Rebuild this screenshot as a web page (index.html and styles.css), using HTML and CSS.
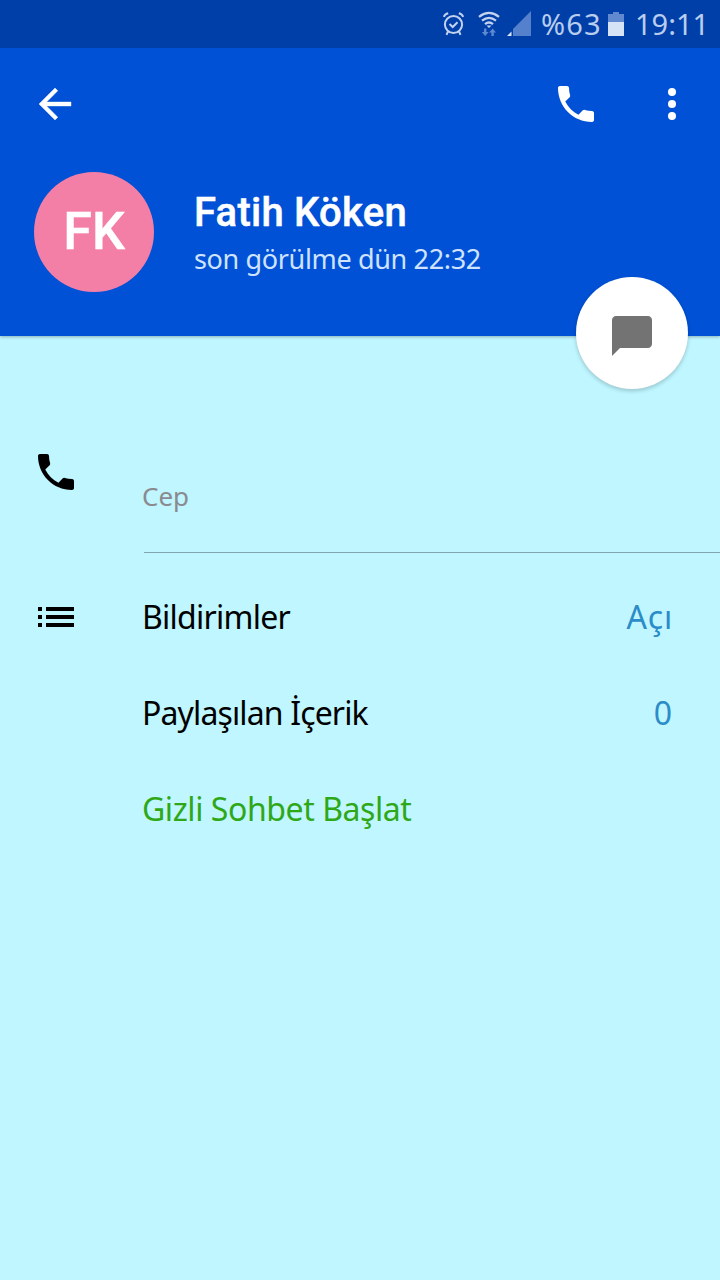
FILE: index.html
```html
<!DOCTYPE html>
<html lang="tr">
<head>
<meta charset="utf-8">
<title>Fatih Köken</title>
<link rel="stylesheet" href="styles.css">
</head>
<body>
<div class="status">
  <svg class="st-alarm" width="24" height="26" viewBox="0 0 24 26" fill="none" stroke="#c3d3ef" stroke-width="2"><circle cx="12.500" cy="13.500" r="8.600"/><path d="M8.500 13l3.200 3 4.800-4.800M2.800 5.800C3.500 4 5 2.800 7.200 2.300M22.200 5.800C21.500 4 20 2.800 17.800 2.300M7 20.500l-1.500 3.300M18 20.500l1.500 3.300"/></svg>
  <svg class="st-wifi" width="22" height="26" viewBox="0 0 22 26" fill="none" stroke="#c3d3ef" stroke-width="2.200"><path d="M1 5.800Q11-2 21 5.800M4 9.600Q11 4 18 9.600M7 13.200Q11 9.800 15 13.200"/><path d="M8.500 14.500h5L11 17z" fill="#c3d3ef" stroke="none"/><path d="M6 17.500v3.500H3.800L7.200 25l3.400-4H8.400v-3.500zM13.400 25v-3.500h-2.200L14.600 17.500l3.400 4h-2.200V25z" fill="#5d89d2" stroke="none"/></svg>
  <svg class="st-signal" width="24" height="26" viewBox="0 0 24 26"><path d="M6 25V18L24 0v25z" fill="#5580cb"/><path d="M0 25l4.500-4.500V25z" fill="#dce7f8"/></svg>
  <span class="st-percent">%63</span>
  <svg class="st-battery" width="16" height="26" viewBox="0 0 16 26"><path d="M0 3h5V1h6v2h5v8H0z" fill="#6089d0"/><path d="M0 11h16v14H0z" fill="#d6e2f6"/></svg>
  <span class="st-time">19:11</span>
</div>
<header class="header">
  <div class="toolbar">
    <svg class="back" width="48" height="48" viewBox="0 0 24 24"><path d="M20 11H7.800l5.600-5.600L12 4l-8 8 8 8 1.400-1.400L7.800 13H20z" fill="#fff" stroke="#fff" stroke-width=".2"/></svg>
    <svg class="call" width="48" height="48" viewBox="0 0 24 24"><path d="M6.620 10.790c1.440 2.830 3.760 5.140 6.590 6.590l2.200-2.200c.27-.27.67-.36 1.020-.24 1.120.37 2.330.57 3.570.57.550 0 1 .45 1 1V20c0 .55-.45 1-1 1-9.390 0-17-7.610-17-17 0-.55.45-1 1-1h3.500c.55 0 1 .45 1 1 0 1.250.2 2.450.57 3.570.11.350.03.740-.25 1.020l-2.200 2.200z" fill="#fff"/></svg>
    <svg class="more" width="48" height="48" viewBox="0 0 24 24" fill="#fff"><circle cx="12" cy="6" r="2"/><circle cx="12" cy="12" r="2"/><circle cx="12" cy="18" r="2"/></svg>
  </div>
  <div class="profile">
    <div class="avatar"><span class="initials">FK</span></div>
    <div class="who">
      <div class="name">Fatih Köken</div>
      <div class="seen">son görülme dün 22:32</div>
    </div>
  </div>
  <div class="fab"><svg width="48" height="48" viewBox="0 0 24 24"><path d="M20 2H4c-1.100 0-2 .9-2 2v18l4-4h14c1.100 0 2-.9 2-2V4c0-1.100-.9-2-2-2z" fill="#737373"/></svg></div>
</header>
<main>
  <div class="phone-row">
    <svg class="row-icon" width="48" height="48" viewBox="0 0 24 24"><path d="M6.620 10.790c1.440 2.830 3.760 5.140 6.590 6.590l2.200-2.200c.27-.27.67-.36 1.020-.24 1.120.37 2.330.57 3.570.57.550 0 1 .45 1 1V20c0 .55-.45 1-1 1-9.390 0-17-7.610-17-17 0-.55.45-1 1-1h3.500c.55 0 1 .45 1 1 0 1.250.2 2.450.57 3.570.11.350.03.740-.25 1.020l-2.200 2.200z"/></svg>
    <div class="phone-type"><span class="cep">Cep</span></div>
  </div>
  <div class="row">
    <svg class="row-icon" width="48" height="48" viewBox="0 0 48 48"><path d="M6 14h4v4H6zM6 22h4v4H6zM6 30h4v4H6zM14 14h28v4H14zM14 22h28v4H14zM14 30h28v4H14z"/></svg>
    <span class="label notif">Bildirimler</span><span class="value state">Açı</span>
  </div>
  <div class="row"><span class="label shared">Paylaşılan İçerik</span><span class="value">0</span></div>
  <div class="row"><span class="label secret">Gizli Sohbet Başlat</span></div>
</main>
</body>
</html>
```
FILE: styles.css
```css
* { box-sizing: border-box; }
body {
  margin: 0;
  width: 720px;
  height: 1280px;
  overflow: hidden;
  background: #bff6ff;
  font-family: "Noto Sans", sans-serif;
  color: #000;
}
svg { display: block; flex: none; }
.status {
  position: relative;
  z-index: 1;
  height: 48px;
  display: flex;
  align-items: center;
  padding-left: 441px;
  background: #003fa8;
  color: #b9cdee;
  font-size: 29px;
  line-height: 48px;
  white-space: nowrap;
}
.st-wifi { margin-left: 13px; }
.st-signal { margin-left: 7px; }
.st-percent { width: 67px; margin-left: 10px; letter-spacing: 1.2px; }
.st-battery { margin-left: 0; }
.st-time { margin-left: 11px; }
.header {
  position: relative;
  height: 288px;
  background: #0051d6;
  box-shadow: 0 1px 3px rgba(0, 0, 0, 0.28);
}
.toolbar {
  display: flex;
  align-items: center;
  height: 112px;
  padding: 0 24px 0 31px;
}
.call { margin-left: auto; }
.more { margin-left: 48px; }
.profile {
  display: flex;
  padding: 12px 0 0 34px;
}
.avatar {
  width: 120px;
  height: 120px;
  border-radius: 50%;
  background: #f47fa6;
  display: flex;
  justify-content: center;
  font: 500 52px/120px Roboto, sans-serif;
  -webkit-text-stroke: 0.5px #fff;
  color: #fff;
}
.who { margin-left: 40px; padding-top: 17px; white-space: nowrap; }
.name {
  font: 500 40px/48px Roboto, sans-serif;
  letter-spacing: 0.25px;
  -webkit-text-stroke: 0.5px #fff;
  color: #fff;
}
.seen {
  font-size: 27px;
  line-height: 44px;
  letter-spacing: -0.35px;
  color: #cfe3ff;
}
.fab {
  position: absolute;
  right: 32px;
  bottom: -53px;
  width: 112px;
  height: 112px;
  padding-top: 6px;
  border-radius: 50%;
  background: #fff;
  box-shadow: 0 2px 4px rgba(0, 0, 0, 0.2);
  display: flex;
  align-items: center;
  justify-content: center;
}
.phone-row {
  display: flex;
  height: 233px;
  padding: 112px 0 16px 32px;
}
.phone-type {
  flex: 1;
  margin-left: 64px;
  height: 105px;
  border-bottom: 1px solid #83a5b0;
}
.cep {
  display: block;
  margin-left: -2px;
  padding-top: 28px;
  font-size: 26px;
  line-height: 40px;
  color: #8a8a8f;
}
.row {
  display: flex;
  align-items: center;
  height: 96px;
  padding: 0 48px 0 142px;
}
.row .row-icon { margin-left: -110px; margin-right: 62px; }
.label, .value { font-size: 32px; line-height: 48px; white-space: nowrap; }
.notif { letter-spacing: -0.75px; }
.shared { letter-spacing: -0.87px; }
.value { margin-left: auto; color: #2c8cc8; }
.state { letter-spacing: 0.8px; margin-right: -1px; }
.secret { letter-spacing: -0.43px; color: #2fa818; }
```
